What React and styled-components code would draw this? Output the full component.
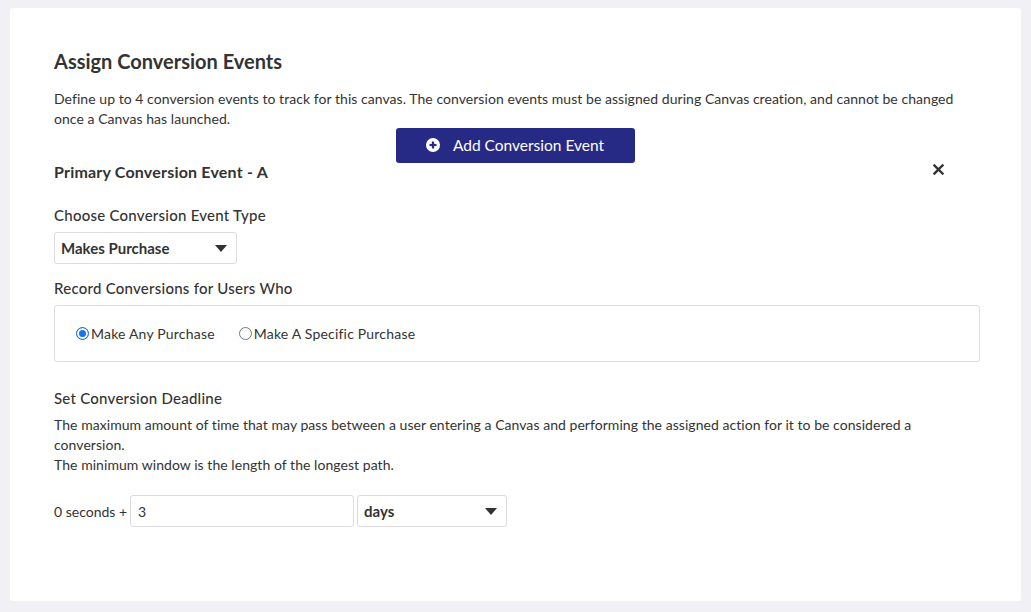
import React from 'react';
import styled, { createGlobalStyle } from 'styled-components';

const GlobalStyle = createGlobalStyle`
  html, body {
    margin: 0;
    padding: 0;
    background: #f0f0f5;
  }
  body {
    font-family: Lato, "Open Sans", sans-serif;
    color: #333;
  }
`;

const Page = styled.div`
  padding: 8px 10px 11px 10px;
  height: 612px;
  box-sizing: border-box;
`;

const Card = styled.div`
  background: #fff;
  border-radius: 3px;
  height: 100%;
  box-sizing: border-box;
  padding: 40px 41px 0 44px;
  display: flex;
  flex-direction: column;
`;

const Title = styled.h2`
  margin: 0;
  font-size: 20px;
  font-weight: 700;
  color: #333;
  line-height: 26px;
`;

const Text = styled.p`
  margin: ${p => p.$mt || 0}px 0 0 0;
  font-size: 14px;
  letter-spacing: 0.05px;
  line-height: 20px;
  color: #333;
`;

const ButtonRow = styled.div`
  display: flex;
  justify-content: center;
  margin-top: -1px;
  padding-right: 4px;
`;

const PrimaryButton = styled.button`
  width: 239px;
  height: 35px;
  background: #272a85;
  color: #fff;
  border: none;
  border-radius: 3px;
  font-family: inherit;
  font-size: 15.5px;
  display: flex;
  align-items: center;
  justify-content: center;
  gap: 13px;
  padding: 0 0 1px 0;
  cursor: pointer;
`;

const HeaderRow = styled.div`
  display: flex;
  justify-content: space-between;
  align-items: center;
  margin-top: -1px;
  padding-right: 36px;
`;

const CloseButton = styled.span`
  display: flex;
  margin-top: -5px;
`;

const SubTitle = styled.h3`
  margin: 0;
  font-size: 16px;
  letter-spacing: 0.2px;
  font-weight: 700;
  line-height: 20px;
  color: #333;
`;

const Label = styled.div`
  margin-top: ${p => p.$mt || 0}px;
  font-size: 15px;
  letter-spacing: 0.25px;
  font-weight: 500;
  line-height: 20px;
  color: #333;
`;

const Select = styled.div`
  margin-top: ${p => p.$mt || 0}px;
  width: ${p => p.$w}px;
  height: 32px;
  box-sizing: border-box;
  border: 1px solid #dcdce0;
  border-radius: 3px;
  display: flex;
  align-items: center;
  justify-content: space-between;
  padding: 0 9px 0 6px;
  font-size: 15px;
  font-weight: 700;
  color: #333;
`;

const Caret = styled.span`
  width: 0;
  height: 0;
  border-left: 6px solid transparent;
  border-right: 6px solid transparent;
  border-top: 7px solid #333;
`;

const RadioBox = styled.div`
  margin-top: 7px;
  height: 57px;
  box-sizing: border-box;
  border: 1px solid #dcdce0;
  border-radius: 3px;
  display: flex;
  align-items: center;
  padding: 0 0 0 21px;
  gap: 24px;
`;

const RadioLabel = styled.label`
  display: flex;
  align-items: center;
  gap: 2px;
  font-size: 14px;
  letter-spacing: 0.2px;
  color: #333;
`;

const RadioDot = styled.span`
  width: 13px;
  height: 13px;
  box-sizing: border-box;
  border-radius: 50%;
  border: 1px solid ${p => (p.$checked ? '#1a73e8' : '#767676')};
  background: ${p => (p.$checked ? '#1a73e8' : '#fff')};
  box-shadow: ${p => (p.$checked ? 'inset 0 0 0 2px #fff' : 'none')};
`;

const DeadlineRow = styled.div`
  margin-top: 20px;
  display: flex;
  align-items: center;
  font-size: 14px;
  color: #333;
`;

const NumberInput = styled.div`
  margin-left: 3px;
  width: 224px;
  height: 32px;
  box-sizing: border-box;
  border: 1px solid #dcdce0;
  border-radius: 3px;
  display: flex;
  align-items: center;
  padding: 0 7px;
  font-size: 14px;
  margin-right: 3px;
`;

const PlusCircle = () => (
  <svg width="14" height="14" viewBox="0 0 14 14">
    <circle cx="7" cy="7" r="7" fill="#fff" />
    <rect x="3.5" y="5.9" width="7" height="2.2" fill="#272a85" />
    <rect x="5.9" y="3.5" width="2.2" height="7" fill="#272a85" />
  </svg>
);

const CloseIcon = () => (
  <svg width="11" height="11" viewBox="0 0 11 11">
    <path d="M1.5 1.5 L9.5 9.5 M9.5 1.5 L1.5 9.5" stroke="#333" strokeWidth="2.4" strokeLinecap="square" />
  </svg>
);

export default function App() {
  return (
    <Page>
      <GlobalStyle />
      <Card>
        <Title>Assign Conversion Events</Title>
        <Text $mt={15}>
          Define up to 4 conversion events to track for this canvas. The conversion events must be assigned during Canvas creation, and cannot be changed once a Canvas has launched.
        </Text>
        <ButtonRow>
          <PrimaryButton>
            <PlusCircle />
            Add Conversion Event
          </PrimaryButton>
        </ButtonRow>
        <HeaderRow>
          <SubTitle>Primary Conversion Event - A</SubTitle>
          <CloseButton>
            <CloseIcon />
          </CloseButton>
        </HeaderRow>
        <Label $mt={23}>Choose Conversion Event Type</Label>
        <Select $mt={7} $w={183}>
          Makes Purchase
          <Caret />
        </Select>
        <Label $mt={14}>Record Conversions for Users Who</Label>
        <RadioBox>
          <RadioLabel>
            <RadioDot $checked />
            Make Any Purchase
          </RadioLabel>
          <RadioLabel>
            <RadioDot />
            Make A Specific Purchase
          </RadioLabel>
        </RadioBox>
        <Label $mt={26}>Set Conversion Deadline</Label>
        <Text $mt={7}>
          The maximum amount of time that may pass between a user entering a Canvas and performing the assigned action for it to be considered a conversion.
          <br />
          The minimum window is the length of the longest path.
        </Text>
        <DeadlineRow>
          0 seconds +
          <NumberInput>3</NumberInput>
          <Select $w={150}>
            days
            <Caret />
          </Select>
        </DeadlineRow>
      </Card>
    </Page>
  );
}
